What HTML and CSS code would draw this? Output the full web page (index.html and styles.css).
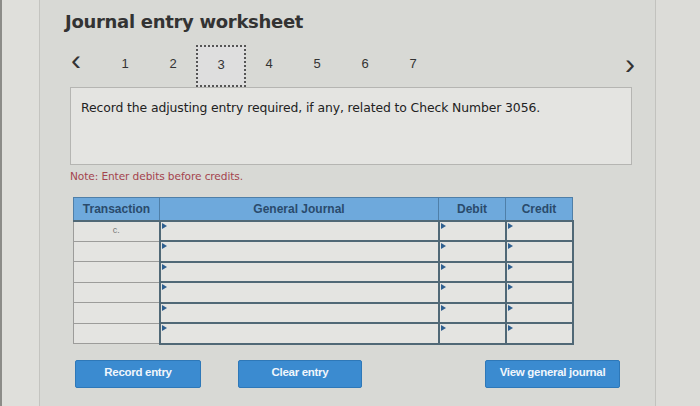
FILE: index.html
```html
<!DOCTYPE html>
<html>
<head>
    <meta charset="UTF-8">
    <title>Journal entry worksheet</title>
    <link rel="stylesheet" href="styles.css">
</head>
<body>
    <div class="screen">
        <div class="edge"></div>

        <div class="panel">
            <h1 class="title">Journal entry worksheet</h1>

            <div class="steps">
                <span class="arrow prev">&lsaquo;</span>
                <span class="step">1</span>
                <span class="step">2</span>
                <span class="step active">3</span>
                <span class="step">4</span>
                <span class="step">5</span>
                <span class="step">6</span>
                <span class="step">7</span>
                <span class="arrow next">&rsaquo;</span>
            </div>

            <div class="prompt">
                Record the adjusting entry required, if any, related to Check Number 3056.
            </div>

            <p class="note">Note: Enter debits before credits.</p>

            <table class="journal">
                <thead>
                    <tr>
                        <th class="col-tx">Transaction</th>
                        <th class="col-acct">General Journal</th>
                        <th class="col-amt">Debit</th>
                        <th class="col-amt">Credit</th>
                    </tr>
                </thead>
                <tbody>
                    <tr>
                        <td class="tx">c.</td>
                        <td class="entry"></td>
                        <td class="entry"></td>
                        <td class="entry"></td>
                    </tr>
                    <tr>
                        <td class="tx"></td>
                        <td class="entry"></td>
                        <td class="entry"></td>
                        <td class="entry"></td>
                    </tr>
                    <tr>
                        <td class="tx"></td>
                        <td class="entry"></td>
                        <td class="entry"></td>
                        <td class="entry"></td>
                    </tr>
                    <tr>
                        <td class="tx"></td>
                        <td class="entry"></td>
                        <td class="entry"></td>
                        <td class="entry"></td>
                    </tr>
                    <tr>
                        <td class="tx"></td>
                        <td class="entry"></td>
                        <td class="entry"></td>
                        <td class="entry"></td>
                    </tr>
                    <tr>
                        <td class="tx"></td>
                        <td class="entry"></td>
                        <td class="entry"></td>
                        <td class="entry"></td>
                    </tr>
                </tbody>
            </table>

            <div class="actions">
                <button class="btn btn-record">Record entry</button>
                <button class="btn btn-clear">Clear entry</button>
                <button class="btn btn-view">View general journal</button>
            </div>
        </div>

        <div class="edge edge-right"></div>
    </div>
</body>
</html>
```

FILE: styles.css
```css
:root {
    --page-bg: #d8d9d5;
    --box-bg: #e4e4e1;
    --head-blue: #6ea9dc;
    --btn-blue: #3b8bd0;
    --grid-dark: #506876;
    --text: #2e2e2e;
}

* {
    box-sizing: border-box;
    margin: 0;
    padding: 0;
}

body {
    background-color: var(--page-bg);
    color: var(--text);
    font-family: 'DejaVu Sans', Verdana, sans-serif;
    overflow: hidden;
}

.screen {
    display: flex;
    height: 406px;
}

.edge {
    width: 40px;
    flex: none;
    background-color: #dfdfdb;
    border-left: 2px solid #8c8c88;
    border-right: 1px solid #c4c4c0;
}

.edge-right {
    width: 45px;
    border-left: 1px solid #c2c2be;
    border-right: none;
    background-color: #dcdcd8;
}

.panel {
    width: 615px;
    flex: none;
    padding: 11px 0 0 25px;
}

.title {
    font-size: 18px;
    font-weight: bold;
    color: #333;
    line-height: 22px;
    letter-spacing: -0.3px;
}

/* step navigation */
.steps {
    display: flex;
    align-items: center;
    height: 42px;
    margin-top: 12px;
    width: 570px;
    font-family: 'Liberation Sans', Arial, sans-serif;
    font-size: 13px;
    color: #333;
}

.step {
    width: 48px;
    height: 42px;
    display: flex;
    align-items: center;
    justify-content: center;
    padding-bottom: 5px;
}

.step.active {
    width: 50px;
    border: 2px dotted #555;
    background-color: #dedede;
    position: relative;
    z-index: 1;
    margin: 0 -1px;
    padding-bottom: 3px;
}

.arrow {
    font-size: 30px;
    line-height: 30px;
    color: #333;
    padding-bottom: 12px;
}

.prev {
    width: 36px;
    padding-left: 6px;
}

.next {
    margin-left: auto;
    padding-bottom: 4px;
}

.prompt {
    width: 562px;
    height: 78px;
    margin: 0 0 0 5px;
    padding: 12px 10px;
    background-color: var(--box-bg);
    border: 1px solid #b5b5b2;
    font-size: 12.4px;
    color: #222;
    letter-spacing: -0.1px;
}

.note {
    margin: 5px 0 0 5px;
    font-size: 10.6px;
    color: #a4444e;
    letter-spacing: -0.1px;
}

/* journal grid */
.journal {
    margin: 15px 0 0 8px;
    border-collapse: collapse;
    width: 499px;
    table-layout: fixed;
}

.journal th {
    height: 23px;
    background-color: var(--head-blue);
    color: #2a4b6c;
    font-family: 'Liberation Sans', Arial, sans-serif;
    font-size: 12px;
    font-weight: bold;
    border: 1px solid #4f7fa8;
    border-bottom: 2px solid var(--grid-dark);
}

.col-tx { width: 86px; }
.col-acct { width: 279px; }
.col-amt { width: 67px; }

.journal td {
    height: 20.5px;
    background-color: var(--box-bg);
}

.tx {
    border: 1px solid #9c9c9a;
    text-align: center;
    font-family: 'Liberation Sans', Arial, sans-serif;
    font-size: 9px;
    color: #777;
    vertical-align: top;
    padding-top: 3px;
}

.entry {
    position: relative;
    border: 2px solid var(--grid-dark);
    border-top-width: 1px;
}

/* small flag marking an editable cell */
.entry::before {
    content: "";
    position: absolute;
    top: 1px;
    left: 1px;
    border-top: 3px solid transparent;
    border-bottom: 3px solid transparent;
    border-left: 5px solid #2f5f8f;
}

.actions {
    display: flex;
    margin: 15px 0 0 10px;
}

.btn {
    height: 28px;
    padding-bottom: 3px;
    background-color: var(--btn-blue);
    border: 1px solid #2e78b8;
    border-radius: 2px;
    color: #f0f6fc;
    font-family: 'Liberation Sans', Arial, sans-serif;
    font-size: 11.5px;
    font-weight: bold;
    letter-spacing: -0.3px;
}

.btn-record {
    width: 126px;
}

.btn-clear {
    width: 124px;
    margin-left: 37px;
}

.btn-view {
    width: 135px;
    margin-left: 123px;
}
```
